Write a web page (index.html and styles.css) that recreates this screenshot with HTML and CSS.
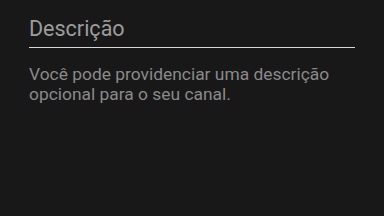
FILE: index.html
```html
<!DOCTYPE html>
<html>
<head>
  <meta charset="UTF-8">
  <title>Descrição</title>
  <link rel="stylesheet" href="styles.css">
</head>
<body>
  <div class="section">
    <h2 class="section-title">Descrição</h2>
    <p class="section-text">Você pode providenciar uma descrição opcional para o seu canal.</p>
  </div>
</body>
</html>
```

FILE: styles.css
```css
body {
  margin: 0;
  background-color: #181818;
  font-family: Roboto, "Liberation Sans", sans-serif;
}

.section {
  width: 326px;
  padding: 16px 0 0 29px;
}

.section-title {
  margin: 0;
  padding-bottom: 5px;
  border-bottom: 1px solid #d8d8d8;
  font-size: 21.5px;
  font-weight: normal;
  line-height: 26px;
  color: #9c9c9c;
}

.section-text {
  margin: 16px 0 0;
  font-size: 17.4px;
  line-height: 20px;
  color: #8a8a8a;
}
```
